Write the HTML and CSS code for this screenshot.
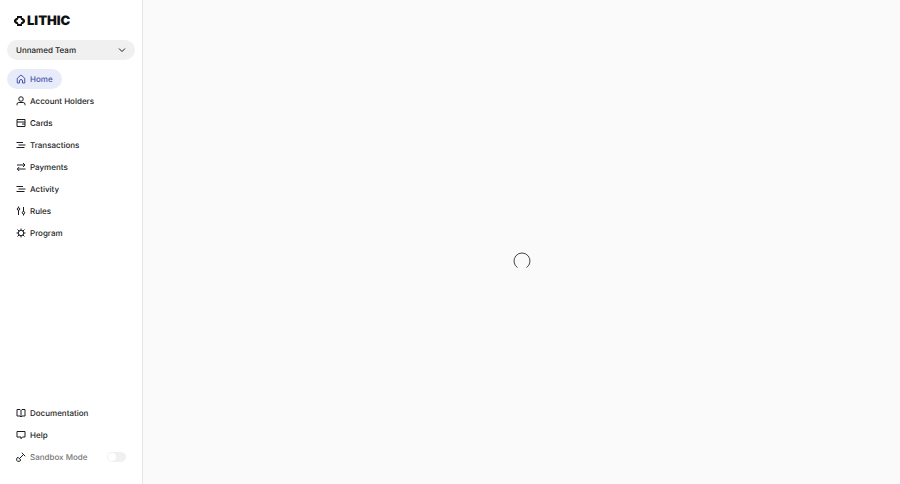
FILE: index.html
```html
<!DOCTYPE html>
<html lang="en">
<head>
<meta charset="utf-8">
<title>Lithic</title>
<link rel="stylesheet" href="styles.css">
</head>
<body>
<div class="app">
  <aside class="sidebar">
    <a class="logo" href="#">
      <svg class="logo-mark" viewBox="0 0 22 20" aria-hidden="true"><path fill-rule="evenodd" d="M6 0h10v4h2l4 4v4l-4 4h-2v4H6v-4H4l-4-4V8l4-4h2zM9 4L8 7l-4 3 4 3 1 3h4l1-3 4-3-4-3-1-3z"/></svg>
      <span>LITHIC</span>
    </a>
    <div class="team">
      <select class="team-select" aria-label="Team"><option>Unnamed Team</option></select>
      <svg class="team-arrow" viewBox="0 0 8 8" aria-hidden="true"><path d="M1 2.500l3 3 3-3"/></svg>
    </div>
    <nav class="nav" aria-label="Main">
      <a class="item active" href="#"><svg class="icon" viewBox="0 0 20 20"><path d="M2.500 8.500L10 2l7.500 6.500v9.500H13v-4a3 3 0 0 0-6 0v4H2.500z"/></svg>Home</a>
      <a class="item" href="#"><svg class="icon" viewBox="0 0 20 20"><circle cx="10" cy="6" r="4.500"/><path d="M2 18.500v-2a3.500 3.500 0 0 1 3.500-3.500h9a3.500 3.500 0 0 1 3.500 3.500v2"/></svg>Account Holders</a>
      <a class="item" href="#"><svg class="icon" viewBox="0 0 20 20"><path d="M2 3h16v14H2zM2 8h16M12 12h6"/></svg>Cards</a>
      <a class="item" href="#"><svg class="icon" viewBox="0 0 20 20"><path d="M1 5h13M5 10h14M1 15h16"/></svg>Transactions</a>
      <a class="item" href="#"><svg class="icon" viewBox="0 0 20 20"><path d="M2 6h16M14 2l4 4-4 4M19 14H3M6.500 10l-4 4 4 4"/></svg>Payments</a>
      <a class="item" href="#"><svg class="icon" viewBox="0 0 20 20"><path d="M1 5h13M5 10h14M1 15h16"/></svg>Activity</a>
      <a class="item" href="#"><svg class="icon" viewBox="0 0 20 20"><circle cx="5" cy="6" r="2.500"/><circle cx="15" cy="13.500" r="2.500"/><path d="M5 1v2.500M5 8.500V18M15 2v9M15 16v3"/></svg>Rules</a>
      <a class="item" href="#"><svg class="icon" viewBox="0 0 20 20"><circle cx="10" cy="10" r="5.500"/><path d="M10 4.500V1M10 15.500V19M4.500 10H1M15.500 10H19M6.500 6.500L3 3M13.500 6.500L17 3M6.500 13.500L3 17M13.500 13.500L17 17"/></svg>Program</a>
    </nav>
    <div class="nav nav-bottom">
      <a class="item" href="#"><svg class="icon" viewBox="0 0 20 20"><path d="M10 5L8 3H2v13h6l2 2 2-2h6V3h-6zM10 5v12"/></svg>Documentation</a>
      <a class="item" href="#"><svg class="icon" viewBox="0 0 20 20"><path d="M2 3h16v11h-5l-3 3.500V14H2z"/></svg>Help</a>
      <label class="item sandbox"><svg class="icon" viewBox="0 0 20 20"><path d="M4 10.500l5.500 5.500-2 2.500H3L1.500 17v-4.500zM6.500 13.500L15 5M11.500 1.500l7 7"/></svg>Sandbox Mode<input class="toggle" type="checkbox" role="switch"></label>
    </div>
  </aside>
  <main class="content">
    <svg class="spinner" viewBox="0 0 18 18" role="img" aria-label="Loading"><path d="M4.500 15.600A8 8 0 1 1 13.500 15.600"/></svg>
  </main>
</div>
</body>
</html>
```
FILE: styles.css
```css
* {
  box-sizing: border-box;
}

body {
  margin: 0;
  font-family: Inter, "Liberation Sans", sans-serif;
  font-size: 8px;
  font-weight: 500;
  line-height: 12px;
  text-rendering: geometricPrecision;
  color: #1c1c1c;
}

svg {
  fill: none;
  stroke: currentColor;
}

.app {
  display: grid;
  grid-template-columns: 143px 1fr;
  min-height: 100vh;
}

.sidebar {
  display: flex;
  flex-direction: column;
  padding: 14px 7px 17px;
  border-right: 1px solid #e6e6e6;
  background: #fff;
}

.logo {
  display: flex;
  align-items: center;
  gap: 2px;
  height: 14px;
  padding-left: 7px;
  color: #111;
  font-size: 13px;
  font-weight: 900;
  text-decoration: none;
}

.logo-mark {
  width: 11px;
  height: 10px;
  fill: currentColor;
  stroke: none;
}

.team {
  position: relative;
  margin: 12px 0 9px;
}

.team-select {
  display: block;
  width: 100%;
  height: 20px;
  padding: 0 24px 0 9px;
  border: 0;
  border-radius: 10px;
  appearance: none;
  background: #f0f0f0;
  color: inherit;
  font: inherit;
  text-rendering: inherit;
}

.team-arrow {
  position: absolute;
  top: 6px;
  right: 9px;
  width: 8px;
  height: 8px;
  pointer-events: none;
}

.nav {
  display: flex;
  flex-direction: column;
  align-items: flex-start;
  gap: 2px;
}

.nav-bottom {
  margin-top: auto;
}

.item {
  display: flex;
  align-items: center;
  gap: 4px;
  height: 20px;
  padding: 0 9px;
  border-radius: 10px;
  color: inherit;
  text-decoration: none;
}

.active {
  background: #e8ecfa;
  color: #4553ac;
}

.icon {
  width: 10px;
  height: 10px;
  stroke-width: 2;
}

.sandbox {
  align-self: stretch;
  color: #777;
}

.sandbox .icon {
  color: #1c1c1c;
}

.toggle {
  display: flex;
  align-items: center;
  width: 19px;
  height: 10px;
  margin: 0 0 0 auto;
  padding: 1px;
  border-radius: 5px;
  appearance: none;
  background: #f0f0f0;
}

.toggle::before {
  content: "";
  width: 8px;
  height: 8px;
  border-radius: 50%;
  background: #fff;
}

.toggle:checked {
  justify-content: flex-end;
  background: #4553ac;
}

.content {
  display: grid;
  place-items: center;
  padding-top: 38px;
  background: #fafafa;
}

.spinner {
  width: 18px;
  height: 18px;
  color: #444;
  stroke-width: 1;
}
```
